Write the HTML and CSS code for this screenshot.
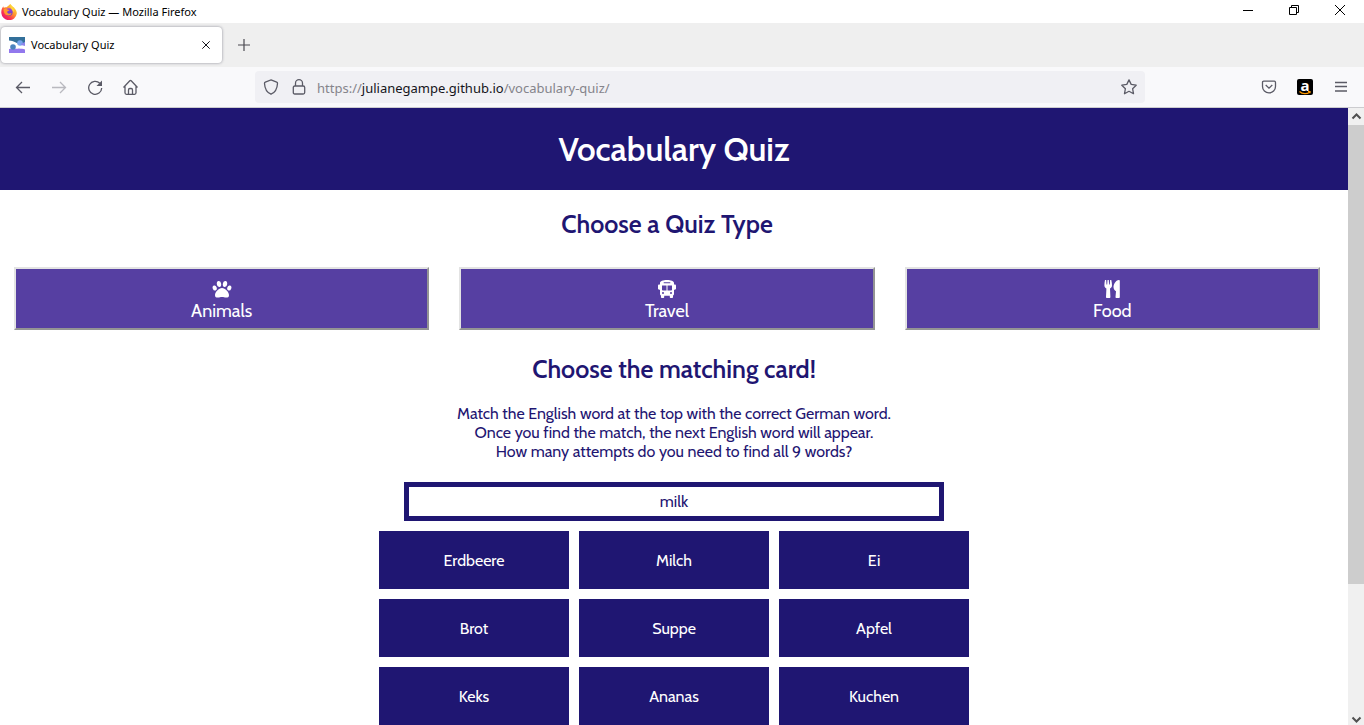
FILE: index.html
```html
<!DOCTYPE html>
<html lang="en">
<head>
<meta charset="utf-8">
<title>Vocabulary Quiz</title>
<link rel="stylesheet" href="styles.css">
</head>
<body>
<div class="titlebar">
  <svg class="app-logo" width="16" height="16" viewBox="0 0 16 16" aria-hidden="true">
    <defs>
      <linearGradient id="flame" x1="0.85" y1="0.1" x2="0.15" y2="0.9"><stop offset="0" stop-color="#ffe63b"/><stop offset="0.4" stop-color="#ff9430"/><stop offset="0.7" stop-color="#ff3a4c"/><stop offset="1" stop-color="#e2166f"/></linearGradient>
      <linearGradient id="globe" x1="0" y1="0" x2="0" y2="1"><stop offset="0" stop-color="#a242dc"/><stop offset="1" stop-color="#5b3fc8"/></linearGradient>
    </defs>
    <path fill="url(#flame)" d="M9.500 0c.3 1.300 1.600 1.900 2.700 3 .6.3 1.200.8 1.500 1.400.8.700 2.300 3 2.100 5.100A7.800 7.800 0 0 1 .3 9C.2 6.300.8 4.300 2.300 2.300l.4 1.500c.9-.7 1.900-.8 2.900-.5C6.700 2.400 8 .9 9.500 0z"/>
    <circle cx="8" cy="8" r="3.700" fill="url(#globe)"/>
    <path fill="#ff9a2e" d="M2.700 5.200c1-.8 2.200-.8 3.200 0 .9.500 1.700.6 2.500.8-.1.900-1.300 1-1.900 1.300-.5.900-.2 1.900.7 2.200 1.300.5 2.300-.6 3.500 0-1 2.200-4.800 2.800-6.700.5-1-1.200-1.500-3-1.300-4.800z"/>
    <path fill="#ffd43a" d="M9.500 0c.3 1.600 2 2.300 2.900 4.100.8 1.500.7 3.100.2 4.500C11.800 5.700 8.600 4.700 9.500 0z"/>
  </svg>
  <span class="window-title">Vocabulary Quiz — Mozilla Firefox</span>
  <div class="window-controls">
    <button class="plain" aria-label="Minimize"><svg width="10" height="10" viewBox="0 0 10 10"><path d="M0 5.500h10" stroke="#000"/></svg></button>
    <button class="plain" aria-label="Restore"><svg width="10" height="10" viewBox="0 0 10 10" fill="none" stroke="#000"><path d="M.5 2.500h7v7h-7zM2.500 2.500v-2h7v7h-2"/></svg></button>
    <button class="plain" aria-label="Close window"><svg width="10" height="10" viewBox="0 0 10 10"><path d="M0 0l10 10M10 0L0 10" stroke="#000"/></svg></button>
  </div>
</div>

<div class="tabbar">
  <div class="tab">
    <svg width="16" height="16" viewBox="0 0 16 16" aria-hidden="true"><path fill="#fff" d="M0 0h16v16H0z"/><path fill="#33709a" d="M0 0h16v6l-6 1C7 6 5 4 0 3.500z"/><path fill="#9278ed" d="M0 12c5-.5 8 0 10-.5 2 .5 4 0 6 1V16H0z"/><circle cx="11" cy="6" r="2.800" fill="#76a5ee"/><circle cx="4" cy="10" r="2.800" fill="#4b83bd"/><path fill="#8d86ec" d="M12 7c2-1 3-2 4-2v4l-4-1z"/></svg>
    <span class="tab-title">Vocabulary Quiz</span>
    <button class="plain" aria-label="Close tab"><svg width="8" height="8" viewBox="0 0 8 8"><path d="M.3.300l7.400 7.400M7.700.300L.3 7.700" stroke="#15141a"/></svg></button>
  </div>
  <button class="plain" aria-label="New tab"><svg width="12" height="12" viewBox="0 0 12 12"><path d="M6 0v12M0 6h12" stroke="#4a4950" stroke-width="1.200"/></svg></button>
</div>

<div class="toolbar">
  <div class="nav-buttons">
    <button class="plain" aria-label="Back"><svg class="line-icon" width="16" height="16" viewBox="0 0 16 16"><path d="M15 8.500H1.500M7 3L1.500 8.500 7 14"/></svg></button>
    <button class="plain" aria-label="Forward" disabled><svg class="line-icon faded" width="16" height="16" viewBox="0 0 16 16"><path d="M1 8.500h13.500M9 3l5.500 5.500L9 14"/></svg></button>
    <button class="plain" aria-label="Reload"><svg class="line-icon" width="16" height="16" viewBox="0 0 16 16"><path d="M14.700 9A6.500 6.500 0 1 1 12.800 4.200"/><path class="solid" d="M15 1.500V7H9.500z"/></svg></button>
    <button class="plain" aria-label="Home"><svg class="line-icon" width="16" height="16" viewBox="0 0 16 16"><path d="M.5 8.500l6.300-6.700q.7-.7 1.400 0l6.300 6.700M2 7.500v6.300q0 1.500 1.500 1.500h8q1.500 0 1.500-1.500V7.500M5.500 15v-4q0-1.500 1.300-1.500h1.400q1.300 0 1.300 1.500v4"/></svg></button>
  </div>
  <div class="urlbar">
    <button class="plain" aria-label="Tracking protection"><svg class="line-icon" width="16" height="16" viewBox="0 0 16 16"><path d="M8 .9l5.700 2.200q.9.400.8 1.400C14.200 10 12.300 13.500 8 15.200 3.700 13.500 1.800 10 1.500 4.500q-.1-1 .8-1.400z"/></svg></button>
    <button class="plain" aria-label="Site information"><svg class="line-icon" width="16" height="16" viewBox="0 0 16 16"><path d="M4.500 7V4.200a3.500 3.500 0 0 1 7 0V7M3.800 7h8.400q1.500 0 1.500 1.500v5q0 1.500-1.500 1.500H3.800q-1.500 0-1.500-1.500v-5Q2.300 7 3.800 7z"/></svg></button>
    <div class="address" role="textbox" aria-label="Address" contenteditable="true" spellcheck="false">https://<span class="domain">julianegampe.github.io</span>/vocabulary-quiz/</div>
    <button class="plain" aria-label="Bookmark this page"><svg class="line-icon" width="16" height="16" viewBox="0 0 16 16"><path stroke-linejoin="round" d="M8 .9l2.200 4.500 5 .8-3.600 3.500.9 5L8 12.300l-4.500 2.400.9-5L.8 6.200l5-.8z"/></svg></button>
  </div>
  <div class="extras">
    <button class="plain" aria-label="Save to Pocket"><svg class="line-icon" width="16" height="16" viewBox="0 0 16 16"><path d="M2.700 2.200h10.600q1.200 0 1.200 1.200v4a6.500 6.500 0 0 1-13 0v-4q0-1.200 1.200-1.200zM4.700 6L8 9.100 11.300 6"/></svg></button>
    <button class="plain amazon" aria-label="Amazon"><span class="amazon-letter">a</span><svg width="12" height="4" viewBox="0 0 12 4"><path d="M.5.500c3 2.800 7.500 2.800 10 .8M9 .5h2v1.800" fill="none" stroke="#f90" stroke-width="1.200"/></svg></button>
    <button class="plain menu" aria-label="Menu"><svg class="line-icon" width="12" height="16" viewBox="0 0 12 16"><path d="M0 3.500h12M0 7.500h12M0 12h12"/></svg></button>
  </div>
</div>

<div class="viewport">
  <div class="page">
    <header class="page-header"><h1>Vocabulary Quiz</h1></header>
    <section class="types">
      <h2>Choose a Quiz Type</h2>
      <div class="type-list">
        <button class="type"><svg width="20" height="18" viewBox="0 0 20 18" fill="#fff" aria-hidden="true"><ellipse cx="2.700" cy="8" rx="2" ry="2.600" transform="rotate(-20 2.700 8)"/><ellipse cx="7" cy="4" rx="2.200" ry="3" transform="rotate(-8 7 4)"/><ellipse cx="13" cy="4" rx="2.200" ry="3" transform="rotate(8 13 4)"/><ellipse cx="17.300" cy="8" rx="2" ry="2.600" transform="rotate(20 17.300 8)"/><path d="M10 8c3.200 0 7 4.200 7 7.200 0 2-1.300 2.300-2.800 2.300-1.800 0-2.600-.6-4.200-.6s-2.400.6-4.200.6c-1.500 0-2.800-.3-2.800-2.300 0-3 3.800-7.200 7-7.200z"/></svg>Animals</button>
        <button class="type"><svg width="20" height="18" viewBox="0 0 20 18" fill="#fff" aria-hidden="true"><path fill-rule="evenodd" d="M10 0c4 0 7 1.200 7 3v1.500h.8c.7 0 1.200.5 1.200 1.200v2.800c0 .7-.5 1.200-1.200 1.200H17V14c0 .8-.4 1.300-1 1.500V17c0 .6-.4 1-1 1h-1.200c-.6 0-1-.4-1-1v-1.300H7.200V17c0 .6-.4 1-1 1H5c-.6 0-1-.4-1-1v-1.500c-.6-.2-1-.7-1-1.500V9.700h-.8C1.500 9.700 1 9.200 1 8.500V5.700c0-.7.5-1.200 1.200-1.200H3V3c0-1.800 3-3 7-3zM6.700 2.300v1h6.600v-1zM5 5.500v4.200c0 .5.400.8.800.8h3.700v-5zm5.500 0v5h3.700c.4 0 .8-.3.800-.8V5.500zM5 13a1 1 0 1 0 2 0 1 1 0 1 0-2 0zm8 0a1 1 0 1 0 2 0 1 1 0 1 0-2 0z"/></svg>Travel</button>
        <button class="type"><svg width="20" height="18" viewBox="0 0 20 18" fill="#fff" aria-hidden="true"><path d="M3 0h1.200l.3 4.500h.7L5.500 0h1.300l.3 4.500h.7L8.100 0h1.200c.4 2 .7 3.800.7 5.200 0 1.800-.8 2.600-2 3.200l.4 8.600c0 .6-.4 1-1 1H5c-.6 0-1-.4-1-1l.4-8.600c-1.200-.6-2-1.400-2-3.200C2.400 3.800 2.600 2 3 0zM17.800 1v16c0 .6-.4 1-1 1h-2.300c-.6 0-1-.4-1-1l.5-5.700c-1.500-1-2.500-2.300-2.500-4.300 0-3.500 3-7 5.300-7 .6 0 1 .4 1 1z"/></svg>Food</button>
      </div>
    </section>
    <main class="quiz">
      <h2>Choose the matching card!</h2>
      <p>Match the English word at the top with the correct German word.<br>Once you find the match, the next English word will appear.<br>How many attempts do you need to find all 9 words?</p>
      <div class="word">milk</div>
      <div class="cards">
        <button class="card">Erdbeere</button><button class="card">Milch</button><button class="card">Ei</button>
        <button class="card">Brot</button><button class="card">Suppe</button><button class="card">Apfel</button>
        <button class="card">Keks</button><button class="card">Ananas</button><button class="card">Kuchen</button>
      </div>
    </main>
  </div>
  <div class="scrollbar" aria-hidden="true">
    <svg class="arrow" width="16" height="17" viewBox="0 0 16 17"><path d="M4.500 10.500L8.500 6.500l4 4"/></svg>
    <div class="track"><div class="thumb"></div></div>
    <svg class="arrow" width="16" height="17" viewBox="0 0 16 17"><path d="M4.500 9.500l4 4 4-4"/></svg>
  </div>
</div>
</body>
</html>
```
FILE: styles.css
```css
* { box-sizing: border-box; }

body {
  margin: 0;
  height: 100vh;
  display: flex;
  flex-direction: column;
  overflow: hidden;
  background: #fff;
  color: #000;
  font: 12px/16px "Segoe UI", "Noto Sans", "Open Sans", sans-serif;
}

svg { display: block; flex: none; }

.plain {
  display: flex;
  align-items: center;
  justify-content: center;
  margin: 0;
  padding: 0;
  border: 0;
  background: none;
}

/* Browser window */
.titlebar {
  display: flex;
  align-items: center;
  flex: none;
  gap: 5px;
  height: 23px;
  padding: 0 19px 0 1px;
  font-size: 11px;
}
.window-controls { display: flex; gap: 36px; margin: 0 0 3px auto; }

.tabbar {
  display: flex;
  align-items: center;
  flex: none;
  gap: 16px;
  height: 44px;
  background: #efefef;
}
.tab {
  display: flex;
  align-items: center;
  gap: 6px;
  width: 221px;
  height: 36px;
  margin-left: 1px;
  padding: 0 12px 0 8px;
  border-radius: 4px;
  background: #fff;
  box-shadow: 0 0 3px #8e8e98;
  font-size: 11px;
}
.tab-title { flex: 1; }

.toolbar {
  display: flex;
  align-items: center;
  flex: none;
  height: 41px;
  padding: 0 17px 0 15px;
  border-bottom: 1px solid #cccccf;
  background: #f9f9fb;
}
.nav-buttons { display: flex; gap: 20px; width: 240px; flex: none; }
.urlbar {
  display: flex;
  align-items: center;
  flex: 1;
  gap: 10px;
  height: 32px;
  padding: 0 8px;
  border-radius: 4px;
  background: #f0f0f4;
}
.urlbar > .plain + .plain { margin-left: 2px; }
.address { flex: 1; padding-top: 2px; outline: 0; font-size: 13px; line-height: 20px; color: #85848b; }
.domain { color: #15141a; }
.extras { display: flex; align-items: center; justify-content: flex-end; gap: 20px; width: 202px; flex: none; }
.menu { margin-left: 2px; }
.line-icon { fill: none; stroke: #5b5b66; stroke-width: 1.3; }
.line-icon .solid { fill: #5b5b66; stroke: none; }
.faded { opacity: .4; }
.amazon {
  flex-direction: column;
  justify-content: flex-start;
  width: 16px;
  height: 16px;
  border-radius: 2px;
  background: #000;
  color: #fff;
}
.amazon-letter { font: bold 15px/12px "Noto Sans", sans-serif; }

/* Quiz page */
.viewport { display: flex; flex: 1; min-height: 0; }
.page {
  flex: 1;
  min-width: 0;
  overflow: hidden;
  color: #1f1672;
  text-align: center;
  font: 16px/19px Cabin, Lato, sans-serif;
}
.page-header { padding: 20px; background: #1f1672; color: #fff; }
h1, h2, p { margin: 0; }
h1 { font-size: 33px; line-height: 42px; font-weight: 600; }
h2 { font-size: 25px; line-height: 28px; font-weight: 600; }

.types { padding: 20px 28px 0 14px; }
.type-list { display: grid; grid-template-columns: repeat(3, 1fr); gap: 30px; margin-top: 29px; }
.type {
  display: flex;
  flex-direction: column;
  align-items: center;
  gap: 2px;
  height: 63px;
  padding: 11px 6px 0;
  border: 2px solid;
  border-color: #e3e3e3 #949494 #949494 #e3e3e3;
  background: #563fa2;
  color: #fff;
  font: 18px/22px Cabin, Lato, sans-serif;
}

.quiz { display: flex; flex-direction: column; align-items: center; padding-top: 25px; }
.quiz p { margin: 21px 0; }
.word {
  width: 40%;
  padding: 5px;
  border: 5px solid #1f1672;
}
.cards { display: grid; grid-template-columns: repeat(3, 190px); gap: 10px; margin-top: 10px; }
.card {
  height: 58px;
  border: 0;
  background: #1f1672;
  color: #fff;
  font: 16px/19px Cabin, Lato, sans-serif;
}

.scrollbar { display: flex; flex-direction: column; flex: none; width: 16px; background: #f0f0f0; }
.arrow { fill: none; stroke: #505050; stroke-width: 2; }
.track { flex: 1; }
.thumb { height: 78.7%; background: #cdcdcd; }
```
